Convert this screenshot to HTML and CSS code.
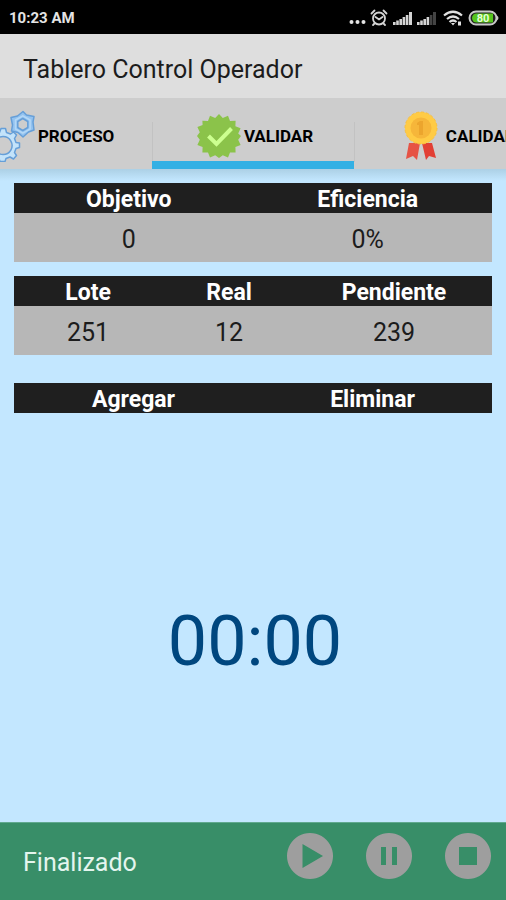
FILE: index.html
```html
<!DOCTYPE html>
<html lang="es">
<head>
<meta charset="utf-8">
<meta name="viewport" content="width=device-width, initial-scale=1">
<title>Tablero Control Operador</title>
<link rel="stylesheet" href="styles.css">
</head>
<body>
<div class="status">
  <span>10:23 AM</span>
  <div class="status-icons">
    <svg width="17" height="20" viewBox="0 0 17 20" fill="#e4e4e4"><circle cx="2.5" cy="14" r="2"/><circle cx="8.500" cy="14" r="2"/><circle cx="14.500" cy="14" r="2"/></svg>
    <svg width="18" height="20" viewBox="0 0 18 20" fill="none" stroke="#d4d4d4" stroke-width="1.800" stroke-linecap="round"><circle cx="9" cy="10.500" r="6"/><path d="M5.500 9l3.500 2.500L12.500 9M1.500 5.500l3-3M16.500 5.500l-3-3M4.500 15.500L3 17M13.500 15.500L15 17"/></svg>
    <svg width="20" height="20" viewBox="0 0 20 20" fill="#d4d4d4"><path d="M1 14h2.600v3H1zM4.200 12.500h2.600V17H4.200zM7.400 11H10v6H7.400zM10.600 9h2.600v8h-2.600zM13.800 7h2.600v10h-2.600zM17 4h3v13h-3z"/></svg>
    <svg width="20" height="20" viewBox="0 0 20 20" fill="#d4d4d4"><path d="M1 14h2.600v3H1zM4.200 12.500h2.600V17H4.200zM7.400 11H10v6H7.400zM10.600 9h2.600v8h-2.600z"/><path fill="#444" d="M13.800 7h2.600v10h-2.600zM17 4h3v13h-3z"/></svg>
    <svg class="wifi" width="20" height="20" viewBox="0 0 20 20" fill="none" stroke="#e0e0e0" stroke-width="2.200"><path d="M1 7.500Q10 0 19 7.500M4 11q6-5 12 0M6.500 14q3.500-3 7 0"/><path fill="#e0e0e0" stroke="none" d="M8 15h4L10 17.500zM15 13.500h3v4h-3z"/></svg>
    <svg width="32" height="20" viewBox="0 0 32 20"><rect x="1.500" y="3.500" width="27" height="13" rx="6.500" fill="#222" stroke="#c9c9c9" stroke-width="2"/><path fill="#c9c9c9" d="M29 7.500q3 2.500 0 5z"/><path fill="#55c51d" d="M8.500 5.500H25v9H8.500a4.500 4.500 0 0 1 0-9z"/><text class="charge" x="15" y="14" text-anchor="middle">80</text></svg>
  </div>
</div>
<header class="title"><h1>Tablero Control Operador</h1></header>
<nav class="tabs">
  <button class="tab" type="button">
    <svg width="44" height="52" viewBox="0 0 44 52" stroke-linejoin="round">
      <path fill="#94c3f0" stroke="#669fd8" stroke-width="1.500" fill-rule="evenodd" d="M32 1.500l3.500 3.500 7.500 1.500-1 5.500 1 8-5.500 2-5.500 5-5-4.500-6.500-1.500 1-6-1.500-7.500 6.500-1.500zM31.800 8.500l-5 3v6l5 3 5-3v-6z"/>
      <path fill="none" stroke="#b4d8f6" stroke-width="1.500" d="M31.800 5.800l7.300 4.200v9l-7.300 4.200-7.300-4.200v-9z"/>
      <path fill="#c3e3fa" stroke="#669fd8" stroke-width="1.500" fill-rule="evenodd" d="M10 18.500h4.500l1 4 4 1.500 3-2 3 3-2 3.500 1.500 4 3.500.5v4.500l-3.500 1-1.500 4 2 3-3 3.500-3.500-2-4 1.500-1 3H9l-1-3-3.500-1.500-3.500 2-3-3 2-3.500-1.500-4-3.500-1v-4.500l3.500-.5 1.500-4-2-3.500 3-3 3.500 2 4-1.500zM12 26.500a9 9 0 1 0 .1 0z"/>
    </svg>
    <span>PROCESO</span>
  </button>
  <button class="tab active" type="button" aria-current="page">
    <svg width="44" height="44" viewBox="0 0 44 44"><path fill="#8bc34a" d="M22 0l3.800 4.100L31 1.700l2 5.200 5.600-.2-.2 5.600 5.200 2-2.400 5.200L44 22l-2.800 3.800L43.600 31l-5.200 2 .2 5.600-5.600-.2-2 5.200-5.200-2.400L22 44l-3.800-2.800L13 43.600l-2-5.200-5.600.2.200-5.600-5.200-2 2.400-5.200L0 22l2.800-3.800L.4 13l5.200-2-.2-4.300 5.600.2 2-5.200 5.200 2.400z"/><path fill="none" stroke="#ccff90" stroke-width="4" d="M11.500 22l8 8 15-15.500"/></svg>
    <span>VALIDAR</span>
  </button>
  <button class="tab" type="button">
    <svg width="44" height="50" viewBox="0 0 44 50"><path fill="#e65345" d="M10 32h11l-3 17-4-4-7 3z"/><path fill="#e23f34" d="M23 32h10l4 15-7-2-3 4z"/><circle cx="22" cy="17" r="16" fill="#ffcb45" stroke="#f9c03f" stroke-dasharray="3 2"/><circle cx="22" cy="17" r="10.500" fill="#f6b63a"/><path fill="#eca52d" d="M18 12l3-2h3v14h-4V14h-2z"/></svg>
    <span>CALIDAD</span>
  </button>
</nav>
<main>
  <table class="two">
    <thead><tr><th>Objetivo</th><th>Eficiencia</th></tr></thead>
    <tbody><tr><td>0</td><td>0%</td></tr></tbody>
  </table>
  <table class="three">
    <thead><tr><th>Lote</th><th>Real</th><th>Pendiente</th></tr></thead>
    <tbody><tr><td>251</td><td>12</td><td>239</td></tr></tbody>
  </table>
  <div class="actions">
    <button type="button">Agregar</button>
    <button type="button">Eliminar</button>
  </div>
  <div class="timer">00:00</div>
</main>
<footer>
  <span>Finalizado</span>
  <div class="controls">
    <button type="button" aria-label="Iniciar"><svg viewBox="0 0 46 46"><path fill="#9e9e9e" fill-rule="evenodd" d="M23 0a23 23 0 1 0 .01 0zM15.500 11v24L36 23z"/></svg></button>
    <button type="button" aria-label="Pausar"><svg viewBox="0 0 46 46"><path fill="#9e9e9e" fill-rule="evenodd" d="M23 0a23 23 0 1 0 .01 0zM15 14h5v18h-5zM26 14h5v18h-5z"/></svg></button>
    <button type="button" aria-label="Detener"><svg viewBox="0 0 46 46"><path fill="#9e9e9e" fill-rule="evenodd" d="M23 0a23 23 0 1 0 .01 0zM14 14h18v18H14z"/></svg></button>
  </div>
</footer>
</body>
</html>
```
FILE: styles.css
```css
* { box-sizing: border-box; }
body {
  margin: 0;
  min-height: 100vh;
  display: flex;
  flex-direction: column;
  font-family: Roboto, "Liberation Sans", sans-serif;
  background: #c3e7ff;
  color: #1c1c1c;
}
button {
  border: 0;
  padding: 0;
  background: none;
  color: inherit;
  font: inherit;
  cursor: pointer;
}
svg { display: block; flex: none; }
.status {
  display: flex;
  justify-content: space-between;
  align-items: center;
  height: 34px;
  padding: 2px 6px 0 9px;
  background: #000;
  color: #e4e4e4;
  font-size: 15px;
  font-weight: 700;
}
.status-icons { display: flex; gap: 4px; }
.wifi { margin: 0 1px 0 3px; }
.charge { fill: #e6ffd6; font-size: 11px; font-weight: 700; }
.title {
  display: flex;
  align-items: center;
  height: 64px;
  padding: 8px 23px 0;
  background: #dedede;
}
h1 { margin: 0; font-size: 25px; line-height: 32px; font-weight: 400; }
.tabs {
  display: flex;
  justify-content: center;
  height: 71px;
  overflow: hidden;
  background: #cdcdcd;
}
.tab {
  flex: 0 0 40%;
  display: flex;
  align-items: center;
  justify-content: center;
  gap: 3px;
  padding: 12px 0 0 4px;
  border-bottom: 8px solid transparent;
  color: #000;
  font-size: 17px;
  font-weight: 700;
}
.tab + .tab {
  background: linear-gradient(#c2c2c2, #c2c2c2) 0 24px / 1px 40px no-repeat;
}
.tab.active { border-bottom-color: #33b0e4; }
main {
  flex: 1;
  display: flex;
  flex-direction: column;
  padding: 14px;
  background: linear-gradient(#acd0e5, #c3e7ff 12px);
}
table {
  width: 100%;
  margin-bottom: 14px;
  border-collapse: collapse;
  table-layout: fixed;
  background: #b7b7b7;
}
th, td { padding: 0; text-align: center; }
th, .actions {
  padding-top: 4px;
  background: #1f1f1f;
  color: #fff;
  font-size: 23px;
  line-height: 26px;
  font-weight: 700;
}
td { padding: 4px 0 0; font-size: 25px; line-height: 45px; }
.two th:first-child { width: 48%; }
.three th:first-child { width: 31%; }
.three th:nth-child(2) { width: 28%; }
.actions {
  display: grid;
  grid-template-columns: 1fr 1fr;
  margin-top: 14px;
}
.timer {
  flex: 1;
  display: flex;
  align-items: center;
  justify-content: center;
  padding: 60px 0 0 4px;
  color: #00477f;
  font-size: 70px;
}
footer {
  display: flex;
  align-items: flex-start;
  justify-content: space-between;
  height: 78px;
  padding: 10px 15px 0 23px;
  border-top: 1px solid #60a98f;
  background: #388e68;
  color: #e4f5ee;
  font-size: 25px;
}
footer span { padding-top: 15px; }
.controls { display: flex; gap: 33px; }
.controls svg { width: 46px; height: 46px; }
```
